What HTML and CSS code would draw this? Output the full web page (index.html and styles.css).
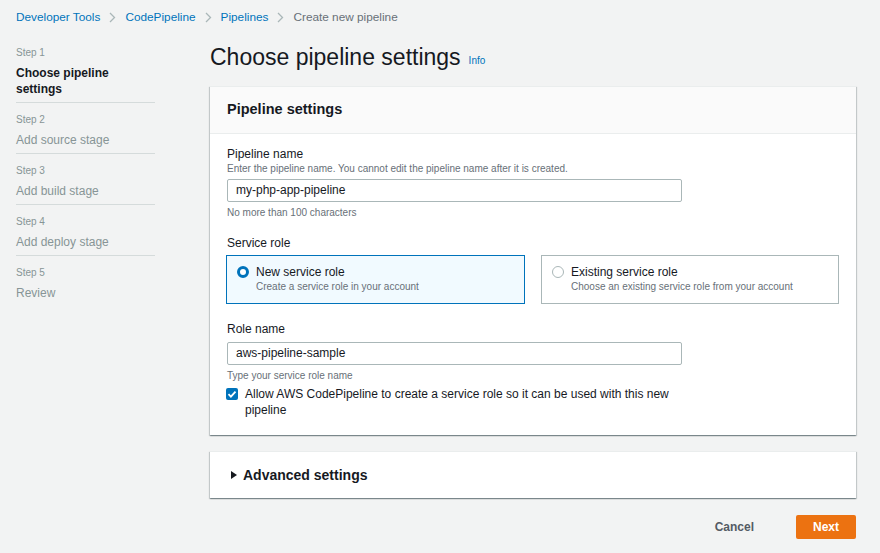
FILE: index.html
```html
<!DOCTYPE html>
<html lang="en">
<head>
<meta charset="utf-8">
<title>Choose pipeline settings</title>
<link rel="stylesheet" href="styles.css">
</head>
<body>
<div class="page">
  <nav class="crumbs">
    <a class="crumb-link">Developer Tools</a>
    <span class="chev"><svg width="7" height="11" viewBox="0 0 7 11"><path d="M1 1l4.5 4.5L1 10" fill="none" stroke="#aab7b8" stroke-width="1.3"/></svg></span>
    <a class="crumb-link">CodePipeline</a>
    <span class="chev"><svg width="7" height="11" viewBox="0 0 7 11"><path d="M1 1l4.5 4.5L1 10" fill="none" stroke="#aab7b8" stroke-width="1.3"/></svg></span>
    <a class="crumb-link">Pipelines</a>
    <span class="chev"><svg width="7" height="11" viewBox="0 0 7 11"><path d="M1 1l4.5 4.5L1 10" fill="none" stroke="#aab7b8" stroke-width="1.3"/></svg></span>
    <span class="crumb-current">Create new pipeline</span>
  </nav>

  <div class="layout">
    <ol class="steps">
      <li class="step active">
        <div class="step-num">Step 1</div>
        <div class="step-title">Choose pipeline settings</div>
      </li>
      <li class="step">
        <div class="step-num">Step 2</div>
        <div class="step-title">Add source stage</div>
      </li>
      <li class="step">
        <div class="step-num">Step 3</div>
        <div class="step-title">Add build stage</div>
      </li>
      <li class="step">
        <div class="step-num">Step 4</div>
        <div class="step-title">Add deploy stage</div>
      </li>
      <li class="step last">
        <div class="step-num">Step 5</div>
        <div class="step-title">Review</div>
      </li>
    </ol>

    <main class="main">
      <h1 class="title"><span>Choose pipeline settings</span><a class="info">Info</a></h1>

      <section class="panel">
        <header class="panel-head">Pipeline settings</header>
        <div class="panel-body">
          <div class="field">
            <div class="label">Pipeline name</div>
            <div class="desc">Enter the pipeline name. You cannot edit the pipeline name after it is created.</div>
            <div class="input">my-php-app-pipeline</div>
            <div class="constraint">No more than 100 characters</div>
          </div>

          <div class="field role-field">
            <div class="label">Service role</div>
            <div class="tiles">
              <div class="tile selected">
                <span class="radio on"></span>
                <div class="tile-text">
                  <div class="tile-title">New service role</div>
                  <div class="tile-desc">Create a service role in your account</div>
                </div>
              </div>
              <div class="tile">
                <span class="radio"></span>
                <div class="tile-text">
                  <div class="tile-title">Existing service role</div>
                  <div class="tile-desc">Choose an existing service role from your account</div>
                </div>
              </div>
            </div>
          </div>

          <div class="field rolename-field">
            <div class="label">Role name</div>
            <div class="input input-role">aws-pipeline-sample</div>
            <div class="constraint">Type your service role name</div>
            <div class="check-row">
              <span class="checkbox"><svg width="12" height="12" viewBox="0 0 12 12"><path d="M2.5 6.2l2.4 2.4 4.6-5" fill="none" stroke="#fff" stroke-width="1.8"/></svg></span>
              <span class="check-label">Allow AWS CodePipeline to create a service role so it can be used with this new pipeline</span>
            </div>
          </div>
        </div>
      </section>

      <section class="panel adv">
        <div class="adv-head"><span class="caret"></span>Advanced settings</div>
      </section>

      <div class="actions">
        <button class="btn-cancel">Cancel</button>
        <button class="btn-next">Next</button>
      </div>
    </main>
  </div>
</div>
</body>
</html>
```

FILE: styles.css
```css
* { box-sizing: border-box; }
html, body { margin: 0; padding: 0; }
body {
  background: #f2f3f3;
  font-family: "Liberation Sans", Arial, sans-serif;
  color: #16191f;
  width: 880px;
  height: 553px;
  overflow: hidden;
}
.page { padding: 9px 24px 0 16px; }

.crumbs {
  display: flex;
  align-items: center;
  font-size: 11.8px;
  line-height: 16px;
  height: 16px;
}
.crumb-link { color: #0073bb; }
.crumb-current { color: #687078; }
.chev { display: inline-flex; margin: 0 9px 0 9px; }

.layout { display: flex; gap: 55px; }

.steps {
  list-style: none;
  margin: 0;
  padding: 21px 0 0 0;
  width: 139px;
  flex: none;
}
.step {
  padding-bottom: 5px;
  border-bottom: 1px solid #d5dbdb;
  margin-bottom: 10px;
}
.step.last { border-bottom: none; }
.step-num {
  font-size: 10px;
  line-height: 14px;
  color: #879596;
}
.step-title {
  margin-top: 5px;
  font-size: 12px;
  line-height: 16px;
  color: #879596;
}
.step.active .step-title { color: #16191f; font-weight: bold; }

.main { flex: 1; min-width: 0; }

.title {
  margin: 16px 0 13px 0;
  height: 32px;
  font-size: 23px;
  line-height: 32px;
  font-weight: normal;
  color: #16191f;
  display: flex;
  align-items: center;
}
.info {
  font-size: 10px;
  line-height: 14px;
  color: #0073bb;
  margin-left: 8px;
  margin-top: 7px;
}

.panel {
  background: #fff;
  box-shadow: 0 1px 1px 0 rgba(0,28,36,0.3), 1px 1px 1px 0 rgba(0,28,36,0.15), -1px 1px 1px 0 rgba(0,28,36,0.15);
  border-top: 1px solid #eaeded;
}
.panel-head {
  background: #fafafa;
  border-bottom: 1px solid #eaeded;
  padding: 13px 17px 14px;
  font-size: 14.5px;
  line-height: 19px;
  font-weight: bold;
}
.panel-body { padding: 12px 17px 17px; }

.label { font-size: 12px; line-height: 16px; color: #16191f; }
.desc { font-size: 10px; line-height: 14px; color: #687078; }
.constraint { font-size: 10px; line-height: 14px; color: #687078; margin-top: 4px; }

.input {
  margin-top: 3px;
  width: 455px;
  height: 23px;
  border: 1px solid #aab7b8;
  border-radius: 2px;
  background: #fff;
  font-size: 12px;
  line-height: 21px;
  padding: 0 8px;
  color: #16191f;
}
.input-role { margin-top: 5px; }

.role-field { margin-top: 15px; }
.tiles {
  margin-top: 4px;
  display: grid;
  grid-template-columns: 1fr 1fr;
  gap: 16px;
}
.tile {
  height: 49px;
  border: 1px solid #aab7b8;
  background: #fff;
  display: flex;
  padding: 8px 10px 0 9px;
  gap: 7px;
}
.tile.selected {
  background: #f1faff;
  border-color: #0073bb;
  margin-left: -1px;
}
.radio {
  flex: none;
  width: 12px;
  height: 12px;
  border-radius: 50%;
  border: 1px solid #aab7b8;
  background: #fff;
  margin-top: 2px;
  margin-left: 1px;
}
.radio.on {
  border: 3.5px solid #0073bb;
}
.tile-title { font-size: 12px; line-height: 16px; color: #16191f; }
.tile-desc { font-size: 10px; line-height: 14px; color: #687078; }

.rolename-field { margin-top: 17px; }

.check-row {
  margin-top: 3px;
  display: flex;
  gap: 7px;
  width: 462px;
}
.checkbox {
  flex: none;
  width: 12px;
  height: 12px;
  background: #0073bb;
  border-radius: 2px;
  margin-top: 2px;
  margin-left: -1px;
  display: inline-flex;
}
.check-label { font-size: 12px; line-height: 16px; color: #16191f; }

.adv { margin-top: 16px; }
.adv-head {
  height: 46px;
  display: flex;
  align-items: center;
  padding-left: 21px;
  font-size: 14px;
  font-weight: bold;
}
.caret {
  width: 0;
  height: 0;
  border-top: 4px solid transparent;
  border-bottom: 4px solid transparent;
  border-left: 6px solid #16191f;
  margin-right: 6px;
}

.actions {
  margin-top: 17px;
  display: flex;
  justify-content: flex-end;
  align-items: center;
  gap: 22px;
}
.btn-cancel {
  background: none;
  border: none;
  font-family: inherit;
  font-size: 12px;
  font-weight: bold;
  color: #545b64;
  padding: 0 20px;
  height: 24px;
}
.btn-next {
  background: #ec7211;
  border: none;
  border-radius: 2px;
  font-family: inherit;
  font-size: 12px;
  font-weight: bold;
  color: #fff;
  width: 60px;
  height: 24px;
}
```
